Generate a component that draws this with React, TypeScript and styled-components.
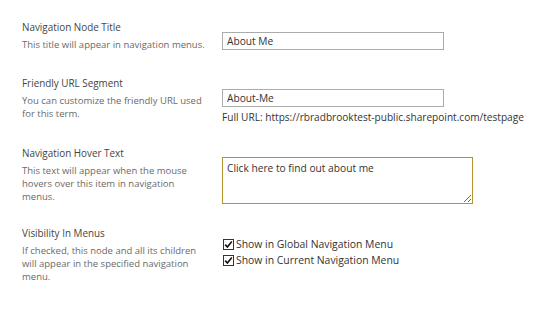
import React from "react";
import styled, { createGlobalStyle } from "styled-components";

const Global = createGlobalStyle`
  html, body { margin: 0; padding: 0; background: #ffffff; }
  body { font-family: "Open Sans", "Noto Sans", sans-serif; }
`;

const Page = styled.div`
  width: 550px;
  height: 313px;
  box-sizing: border-box;
  padding: 20px 0 0 22px;
  background: #fff;
`;

const Row = styled.div<{ $gap: number }>`
  display: grid;
  grid-template-columns: 200px 1fr;
  margin-bottom: ${(p) => p.$gap}px;
`;

const Left = styled.div`
  display: flex;
  flex-direction: column;
  gap: 4px;
`;

const Label = styled.div`
  font-size: 9.9px;
  line-height: 14px;
  color: #444;
`;

const Desc = styled.div`
  font-size: 9.5px;
  line-height: 13px;
  color: #6a6a6a;
  width: 184px;
`;

const Right = styled.div<{ $top: number }>`
  padding-top: ${(p) => p.$top}px;
  display: flex;
  flex-direction: column;
  align-items: flex-start;
`;

const TextInput = styled.input`
  box-sizing: border-box;
  width: 222px;
  height: 18px;
  border: 1px solid #ababab;
  padding: 0 4px;
  font-family: inherit;
  font-size: 10.2px;
  color: #333;
  outline: none;
  background: #fff;
`;

const Hint = styled.div`
  font-size: 10.1px;
  line-height: 14px;
  margin-top: 3px;
  color: #333;
`;

const Area = styled.textarea`
  box-sizing: border-box;
  width: 251px;
  height: 47px;
  border: 1px solid #b2962c;
  padding: 3px 4px;
  font-family: inherit;
  font-size: 10.2px;
  line-height: 14px;
  color: #333;
  resize: both;
  outline: none;
  margin: 0;
`;

const CheckRow = styled.label`
  display: flex;
  align-items: center;
  gap: 2px;
  font-size: 10.4px;
  line-height: 16px;
  color: #333;
  margin-left: 1px;
`;

const Box = styled.span`
  display: inline-flex;
  width: 11px;
  height: 11px;
  box-sizing: border-box;
  border: 1px solid #333;
  background: #fff;
  align-items: center;
  justify-content: center;
`;

const Check = () => (
  <Box>
    <svg width="9" height="9" viewBox="0 0 9 9">
      <path d="M1.2 4.6 L3.4 7 L7.8 1.6" fill="none" stroke="#111" strokeWidth="1.6" />
    </svg>
  </Box>
);

export default function App() {
  return (
    <Page>
      <Global />
      <Row $gap={25}>
        <Left>
          <Label>Navigation Node Title</Label>
          <Desc>This title will appear in navigation menus.</Desc>
        </Left>
        <Right $top={12}>
          <TextInput defaultValue="About Me" />
        </Right>
      </Row>
      <Row $gap={22}>
        <Left>
          <Label>Friendly URL Segment</Label>
          <Desc>You can customize the friendly URL used for this term.</Desc>
        </Left>
        <Right $top={13}>
          <TextInput defaultValue="About-Me" />
          <Hint>Full URL: https://rbradbrooktest-public.sharepoint.com/testpage</Hint>
        </Right>
      </Row>
      <Row $gap={22}>
        <Left>
          <Label>Navigation Hover Text</Label>
          <Desc>This text will appear when the mouse hovers over this item in navigation menus.</Desc>
        </Left>
        <Right $top={11}>
          <Area defaultValue="Click here to find out about me" />
        </Right>
      </Row>
      <Row $gap={0}>
        <Left>
          <Label>Visibility In Menus</Label>
          <Desc>If checked, this node and all its children will appear in the specified navigation menu.</Desc>
        </Left>
        <Right $top={10}>
          <CheckRow>
            <Check />
            Show in Global Navigation Menu
          </CheckRow>
          <CheckRow>
            <Check />
            Show in Current Navigation Menu
          </CheckRow>
        </Right>
      </Row>
    </Page>
  );
}
